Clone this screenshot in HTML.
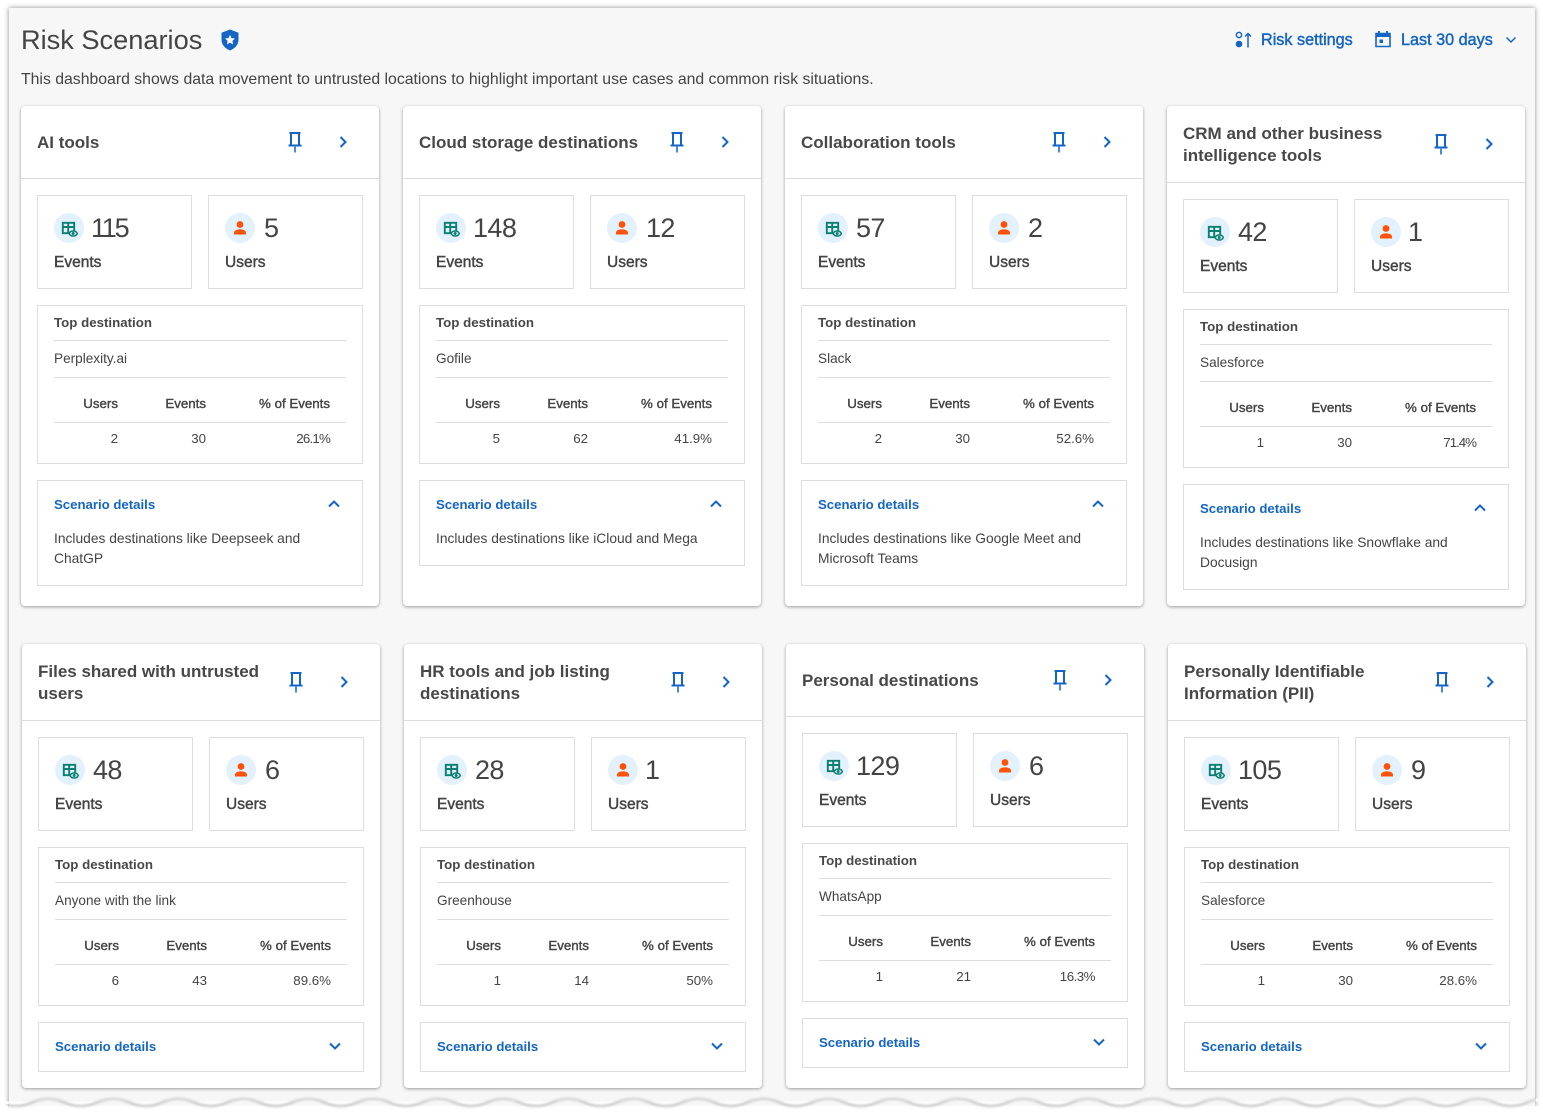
<!DOCTYPE html>
<html lang="en"><head><meta charset="utf-8"><title>Risk Scenarios</title>
<style>
*{box-sizing:border-box}
html,body{margin:0;padding:0;width:1543px;height:1114px;overflow:hidden;background:#fff;font-family:"Liberation Sans",sans-serif;color:#444}
#sheet{position:absolute;left:9px;top:8px;width:1526px;height:1100px;background:#f7f7f7;box-shadow:0 0 5px rgba(0,0,0,.45)}
#wave{position:absolute;left:0;top:1085px;display:block}
.abs{position:absolute;white-space:nowrap}
h1{position:absolute;left:21px;top:22px;margin:0;font-size:27.2px;line-height:36px;font-weight:400;color:#444}
.sub{position:absolute;left:21px;top:70px;font-size:15.8px;line-height:20px;white-space:nowrap}
.lnk{position:absolute;top:30px;font-size:16.2px;line-height:20px;color:#1565c4;-webkit-text-stroke:.45px #1565c4;white-space:nowrap}
.card{position:absolute;width:358px;background:#fff;border-radius:4px;box-shadow:0 1px 3px rgba(0,0,0,.38)}
.hd{position:absolute;left:0;top:0;width:358px;border-bottom:1px solid #ddd}
.t{position:absolute;left:16px;width:250px;margin-top:1px;font-size:17px;line-height:22px;font-weight:700;color:#484848}
.pin{position:absolute;left:264px;width:20px;height:22px}
.go{position:absolute;left:316px;width:12px;height:14px}
.b{position:absolute;left:0;width:358px}
.box{position:absolute;background:#fff;border:1px solid #ddd}
.s1{left:16px;top:16px;width:155px;height:94px}
.s2{left:187px;top:16px;width:155px;height:94px}
.ci{position:absolute;left:16px;top:17px;width:30px;height:30px;border-radius:50%;background:#e3f1fc}
.ci svg{position:absolute;left:0;top:0}
.n{position:absolute;left:53px;top:14px;font-size:27px;letter-spacing:-.6px;line-height:36px;white-space:nowrap}
.s2 .n{left:55px}
.l{position:absolute;left:16px;top:57px;font-size:15.5px;line-height:20px;-webkit-text-stroke:.45px #444}
.d{left:16px;top:126px;width:326px;height:159px}
.d div{position:absolute;white-space:nowrap;font-size:13.3px;line-height:18px}
.d .ln{left:16px;width:292px;height:1px;background:#ddd}
.d .h{-webkit-text-stroke:.4px #444}
.d .r1{left:16px;top:8px;font-weight:700;color:#484848}
.d .r2{left:16px;top:44px;font-size:13.6px}
.c1,.c2,.c3{text-align:right;width:100px}
.c1{left:-20px}.c2{left:68px}.c3{left:192px}
.r3{top:89px}.r4{top:124px}
.x{left:16px;top:301px;width:326px}
.x .st{position:absolute;left:16px;top:15px;font-size:13.2px;line-height:18px;font-weight:700;color:#1565c4;white-space:nowrap}
.x .ch{position:absolute;left:289px;top:18px;width:14px;height:10px}
.x .tx{position:absolute;left:16px;top:48px;width:290px;font-size:13.8px;line-height:20px}
</style></head><body>
<svg width="0" height="0" style="position:absolute">
<symbol id="pin" viewBox="0 0 20 22"><path d="M4.500 2h11M6 2v12.500M14 2v12.500M3.500 14.500h13" fill="none" stroke="#1565c4" stroke-width="2"/><path d="M10 15v6.500" stroke="#4a8ad8" stroke-width="2"/></symbol>
<symbol id="go" viewBox="0 0 12 14"><path d="M3.500 2l5 5-5 5" fill="none" stroke="#1565c4" stroke-width="2"/></symbol>
<symbol id="up" viewBox="0 0 14 10"><path d="M2 7.500l5-5 5 5" fill="none" stroke="#1565c4" stroke-width="2"/></symbol>
<symbol id="dn" viewBox="0 0 14 10"><path d="M2 2.500l5 5 5-5" fill="none" stroke="#1565c4" stroke-width="2"/></symbol>
<symbol id="ev" viewBox="0 0 30 30"><path d="M8.800 9.800h11.400v10.400H8.800zM8.800 14h11.400M14.200 9.800v10.400" fill="none" stroke="#0b7f72" stroke-width="1.900"/><path d="M15 20.500c1.800-3.400 7-3.400 8.300 0-1.300 3.400-6.500 3.400-8.300 0z" fill="#e3f1fc" stroke="#0b7f72" stroke-width="1.500"/><circle cx="19.200" cy="20.500" r="1.500" fill="#0b7f72"/></symbol>
<symbol id="us" viewBox="0 0 30 30"><circle cx="15" cy="11.500" r="3.400" fill="#ff5208"/><path d="M9 21.500v-1.800c0-2 2.500-3.300 6-3.300s6 1.300 6 3.300v1.800z" fill="#ff5208"/></symbol>
</svg>
<div id="sheet"></div>
<svg id="wave" width="1543" height="29" viewBox="0 0 1543 29"><defs><filter id="bl" x="-2%" y="-100%" width="104%" height="300%"><feGaussianBlur stdDeviation="1.200"/></filter><clipPath id="cp"><rect x="8" y="0" width="1528" height="29"/></clipPath>
<path id="wv" d="M-0.500 16.500q16.250 7 32.500 0t32.500 0t32.500 0t32.500 0t32.500 0t32.500 0t32.500 0t32.500 0t32.500 0t32.500 0t32.500 0t32.500 0t32.500 0t32.500 0t32.500 0t32.500 0t32.500 0t32.500 0t32.500 0t32.500 0t32.500 0t32.500 0t32.500 0t32.500 0t32.500 0t32.500 0t32.500 0t32.500 0t32.500 0t32.500 0t32.500 0t32.500 0t32.500 0t32.500 0t32.500 0t32.500 0t32.500 0t32.500 0t32.500 0t32.500 0t32.500 0t32.500 0t32.500 0t32.500 0t32.500 0t32.500 0t32.500 0t32.500 0"/></defs>
<use href="#wv" fill="#fff" stroke="none"/>
<rect x="0" y="21" width="1543" height="8" fill="#fff"/>
<g clip-path="url(#cp)"><use href="#wv" fill="none" stroke="#b0b0b0" stroke-width="1.500" filter="url(#bl)" transform="translate(0,1)"/></g>
</svg>

<h1>Risk Scenarios</h1>
<svg class="abs" style="left:220px;top:28px" width="20" height="24" viewBox="0 0 20 24"><path d="M10 1.500l8.500 3.300v7c0 5-3.500 8.700-8.500 10.700C5 20.500 1.500 16.800 1.500 11.800v-7z" fill="#1565c4"/><path d="M10 6.800l1.500 3.300 3.500.4-2.600 2.400.7 3.500-3.100-1.800-3.100 1.800.7-3.500L5 10.500l3.500-.4z" fill="#fff"/></svg>
<div class="sub">This dashboard shows data movement to untrusted locations to highlight important use cases and common risk situations.</div>
<svg class="abs" style="left:1233px;top:30px" width="20" height="20" viewBox="0 0 20 20"><circle cx="6" cy="5" r="2.600" fill="none" stroke="#1565c4" stroke-width="1.500"/><circle cx="6" cy="14" r="3.300" fill="#1565c4"/><path d="M15 17.500V4M12 6.500l3-3 3 3" fill="none" stroke="#1565c4" stroke-width="1.500"/></svg>
<div class="lnk" style="left:1261px">Risk settings</div>
<svg class="abs" style="left:1374px;top:30px" width="18" height="18" viewBox="0 0 18 18"><path d="M2 3.500h14v13H2z" fill="none" stroke="#1565c4" stroke-width="1.600"/><path d="M2 3h14v4H2z" fill="#1565c4"/><path d="M5 1v3M13 1v3" stroke="#1565c4" stroke-width="1.800"/><path d="M5.500 9.500h3.500v3.500H5.500z" fill="#1565c4"/></svg>
<div class="lnk" style="left:1401px">Last 30 days</div>
<svg class="abs" style="left:1504px;top:35px" width="14" height="10" viewBox="0 0 14 10"><path d="M2.500 2.500l4.500 4.500 4.500-4.500" fill="none" stroke="#1565c4" stroke-width="1.500"/></svg>

<!-- ROW 1 -->
<div class="card" style="left:21px;top:106px;height:500px">
<div class="hd" style="height:73px"></div><div class="t" style="top:25px">AI tools</div>
<svg class="pin" style="top:25px"><use href="#pin"/></svg><svg class="go" style="left:316px;top:29px"><use href="#go"/></svg>
<div class="b" style="top:73px">
<div class="box s1"><span class="ci"><svg width="30" height="30"><use href="#ev"/></svg></span><div class="n" style="letter-spacing:-2.200px">115</div><div class="l">Events</div></div>
<div class="box s2"><span class="ci"><svg width="30" height="30"><use href="#us"/></svg></span><div class="n">5</div><div class="l">Users</div></div>
<div class="box d"><div class="r1">Top destination</div><div class="ln" style="top:34px"></div><div class="r2">Perplexity.ai</div><div class="ln" style="top:71px"></div>
<div class="h r3 c1">Users</div><div class="h r3 c2">Events</div><div class="h r3 c3">% of Events</div><div class="ln" style="top:116px"></div>
<div class="r4 c1">2</div><div class="r4 c2">30</div><div class="r4 c3" style="letter-spacing:-.8px">26.1%</div></div>
<div class="box x" style="height:106px"><div class="st">Scenario details</div><svg class="ch"><use href="#up"/></svg><div class="tx">Includes destinations like Deepseek and ChatGP</div></div>
</div></div>

<div class="card" style="left:403px;top:106px;height:500px">
<div class="hd" style="height:73px"></div><div class="t" style="top:25px">Cloud storage destinations</div>
<svg class="pin" style="top:25px"><use href="#pin"/></svg><svg class="go" style="top:29px"><use href="#go"/></svg>
<div class="b" style="top:73px">
<div class="box s1"><span class="ci"><svg width="30" height="30"><use href="#ev"/></svg></span><div class="n">148</div><div class="l">Events</div></div>
<div class="box s2"><span class="ci"><svg width="30" height="30"><use href="#us"/></svg></span><div class="n">12</div><div class="l">Users</div></div>
<div class="box d"><div class="r1">Top destination</div><div class="ln" style="top:34px"></div><div class="r2">Gofile</div><div class="ln" style="top:71px"></div>
<div class="h r3 c1">Users</div><div class="h r3 c2">Events</div><div class="h r3 c3">% of Events</div><div class="ln" style="top:116px"></div>
<div class="r4 c1">5</div><div class="r4 c2">62</div><div class="r4 c3">41.9%</div></div>
<div class="box x" style="height:86px"><div class="st">Scenario details</div><svg class="ch"><use href="#up"/></svg><div class="tx">Includes destinations like iCloud and Mega</div></div>
</div></div>

<div class="card" style="left:785px;top:106px;height:500px">
<div class="hd" style="height:73px"></div><div class="t" style="top:25px">Collaboration tools</div>
<svg class="pin" style="top:25px"><use href="#pin"/></svg><svg class="go" style="top:29px"><use href="#go"/></svg>
<div class="b" style="top:73px">
<div class="box s1"><span class="ci"><svg width="30" height="30"><use href="#ev"/></svg></span><div class="n" style="left:54px">57</div><div class="l">Events</div></div>
<div class="box s2"><span class="ci"><svg width="30" height="30"><use href="#us"/></svg></span><div class="n">2</div><div class="l">Users</div></div>
<div class="box d"><div class="r1">Top destination</div><div class="ln" style="top:34px"></div><div class="r2">Slack</div><div class="ln" style="top:71px"></div>
<div class="h r3 c1">Users</div><div class="h r3 c2">Events</div><div class="h r3 c3">% of Events</div><div class="ln" style="top:116px"></div>
<div class="r4 c1">2</div><div class="r4 c2">30</div><div class="r4 c3">52.6%</div></div>
<div class="box x" style="height:106px"><div class="st">Scenario details</div><svg class="ch"><use href="#up"/></svg><div class="tx">Includes destinations like Google Meet and Microsoft Teams</div></div>
</div></div>

<div class="card" style="left:1167px;top:106px;height:500px">
<div class="hd" style="height:77px"></div><div class="t" style="top:16px">CRM and other business intelligence tools</div>
<svg class="pin" style="top:27px"><use href="#pin"/></svg><svg class="go" style="top:31px"><use href="#go"/></svg>
<div class="b" style="top:77px">
<div class="box s1"><span class="ci"><svg width="30" height="30"><use href="#ev"/></svg></span><div class="n" style="left:54px">42</div><div class="l">Events</div></div>
<div class="box s2"><span class="ci"><svg width="30" height="30"><use href="#us"/></svg></span><div class="n" style="left:53px">1</div><div class="l">Users</div></div>
<div class="box d"><div class="r1">Top destination</div><div class="ln" style="top:34px"></div><div class="r2">Salesforce</div><div class="ln" style="top:71px"></div>
<div class="h r3 c1">Users</div><div class="h r3 c2">Events</div><div class="h r3 c3">% of Events</div><div class="ln" style="top:116px"></div>
<div class="r4 c1">1</div><div class="r4 c2">30</div><div class="r4 c3" style="letter-spacing:-1px">71.4%</div></div>
<div class="box x" style="height:106px"><div class="st">Scenario details</div><svg class="ch"><use href="#up"/></svg><div class="tx">Includes destinations like Snowflake and Docusign</div></div>
</div></div>

<!-- ROW 2 -->
<div class="card" style="left:22px;top:644px;height:444px">
<div class="hd" style="height:77px"></div><div class="t" style="top:16px">Files shared with untrusted users</div>
<svg class="pin" style="top:27px"><use href="#pin"/></svg><svg class="go" style="top:31px"><use href="#go"/></svg>
<div class="b" style="top:77px">
<div class="box s1"><span class="ci"><svg width="30" height="30"><use href="#ev"/></svg></span><div class="n" style="left:54px">48</div><div class="l">Events</div></div>
<div class="box s2"><span class="ci"><svg width="30" height="30"><use href="#us"/></svg></span><div class="n">6</div><div class="l">Users</div></div>
<div class="box d"><div class="r1">Top destination</div><div class="ln" style="top:34px"></div><div class="r2">Anyone with the link</div><div class="ln" style="top:71px"></div>
<div class="h r3 c1">Users</div><div class="h r3 c2">Events</div><div class="h r3 c3">% of Events</div><div class="ln" style="top:116px"></div>
<div class="r4 c1">6</div><div class="r4 c2">43</div><div class="r4 c3">89.6%</div></div>
<div class="box x" style="height:50px"><div class="st">Scenario details</div><svg class="ch"><use href="#dn"/></svg></div>
</div></div>

<div class="card" style="left:404px;top:644px;height:444px">
<div class="hd" style="height:77px"></div><div class="t" style="top:16px">HR tools and job listing destinations</div>
<svg class="pin" style="top:27px"><use href="#pin"/></svg><svg class="go" style="top:31px"><use href="#go"/></svg>
<div class="b" style="top:77px">
<div class="box s1"><span class="ci"><svg width="30" height="30"><use href="#ev"/></svg></span><div class="n" style="left:54px">28</div><div class="l">Events</div></div>
<div class="box s2"><span class="ci"><svg width="30" height="30"><use href="#us"/></svg></span><div class="n" style="left:53px">1</div><div class="l">Users</div></div>
<div class="box d"><div class="r1">Top destination</div><div class="ln" style="top:34px"></div><div class="r2">Greenhouse</div><div class="ln" style="top:71px"></div>
<div class="h r3 c1">Users</div><div class="h r3 c2">Events</div><div class="h r3 c3">% of Events</div><div class="ln" style="top:116px"></div>
<div class="r4 c1">1</div><div class="r4 c2">14</div><div class="r4 c3">50%</div></div>
<div class="box x" style="height:50px"><div class="st">Scenario details</div><svg class="ch"><use href="#dn"/></svg></div>
</div></div>

<div class="card" style="left:786px;top:644px;height:444px">
<div class="hd" style="height:73px"></div><div class="t" style="top:25px">Personal destinations</div>
<svg class="pin" style="top:25px"><use href="#pin"/></svg><svg class="go" style="top:29px"><use href="#go"/></svg>
<div class="b" style="top:73px">
<div class="box s1"><span class="ci"><svg width="30" height="30"><use href="#ev"/></svg></span><div class="n">129</div><div class="l">Events</div></div>
<div class="box s2"><span class="ci"><svg width="30" height="30"><use href="#us"/></svg></span><div class="n">6</div><div class="l">Users</div></div>
<div class="box d"><div class="r1">Top destination</div><div class="ln" style="top:34px"></div><div class="r2">WhatsApp</div><div class="ln" style="top:71px"></div>
<div class="h r3 c1">Users</div><div class="h r3 c2">Events</div><div class="h r3 c3">% of Events</div><div class="ln" style="top:116px"></div>
<div class="r4 c1">1</div><div class="r4 c2">21</div><div class="r4 c3" style="letter-spacing:-.5px">16.3%</div></div>
<div class="box x" style="height:50px"><div class="st">Scenario details</div><svg class="ch"><use href="#dn"/></svg></div>
</div></div>

<div class="card" style="left:1168px;top:644px;height:444px">
<div class="hd" style="height:77px"></div><div class="t" style="top:16px">Personally Identifiable Information (PII)</div>
<svg class="pin" style="top:27px"><use href="#pin"/></svg><svg class="go" style="top:31px"><use href="#go"/></svg>
<div class="b" style="top:77px">
<div class="box s1"><span class="ci"><svg width="30" height="30"><use href="#ev"/></svg></span><div class="n">105</div><div class="l">Events</div></div>
<div class="box s2"><span class="ci"><svg width="30" height="30"><use href="#us"/></svg></span><div class="n">9</div><div class="l">Users</div></div>
<div class="box d"><div class="r1">Top destination</div><div class="ln" style="top:34px"></div><div class="r2">Salesforce</div><div class="ln" style="top:71px"></div>
<div class="h r3 c1">Users</div><div class="h r3 c2">Events</div><div class="h r3 c3">% of Events</div><div class="ln" style="top:116px"></div>
<div class="r4 c1">1</div><div class="r4 c2">30</div><div class="r4 c3">28.6%</div></div>
<div class="box x" style="height:50px"><div class="st">Scenario details</div><svg class="ch"><use href="#dn"/></svg></div>
</div></div>
</body></html>
